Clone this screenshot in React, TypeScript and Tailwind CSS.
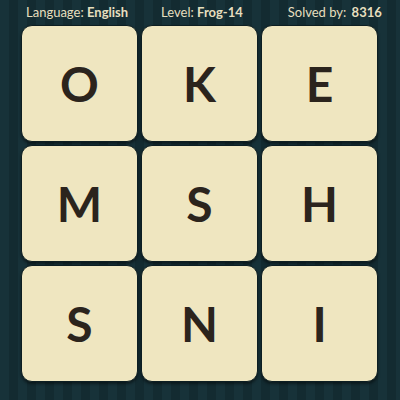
const letters = ["O", "K", "E", "M", "S", "H", "S", "N", "I"];

function Tile({ letter }: { letter: string }) {
  return (
    <div className="h-[117px] rounded-[11px] border border-[#0d1e22] bg-[#efe6c0] shadow-[0_2px_3px_rgba(0,0,0,0.45)] flex items-center justify-center">
      <span className="text-[48px] leading-none font-bold text-[#2b241d] font-['Lato',sans-serif]">
        {letter}
      </span>
    </div>
  );
}

export default function App() {
  return (
    <div className="w-[400px] h-[400px] overflow-hidden bg-[repeating-linear-gradient(90deg,#173239_0px,#173239_9px,#132b31_9px,#132b31_18px)] font-['Lato',sans-serif]">
      <div className="h-[25px] pt-[1px] flex items-center text-[13px] text-[#e6dfbf] pl-[26px]">
        <span>
          Language: <span className="font-bold">English</span>
        </span>
        <span className="ml-[33px]">
          Level: <span className="font-bold">Frog-14</span>
        </span>
        <span className="ml-[45px]">
          Solved by: <span className="font-bold ml-[2px]">8316</span>
        </span>
      </div>
      <div className="grid grid-cols-3 gap-[3px] pl-[21px] pr-[22px]">
        {letters.map((l, i) => (
          <Tile key={i} letter={l} />
        ))}
      </div>
    </div>
  );
}
